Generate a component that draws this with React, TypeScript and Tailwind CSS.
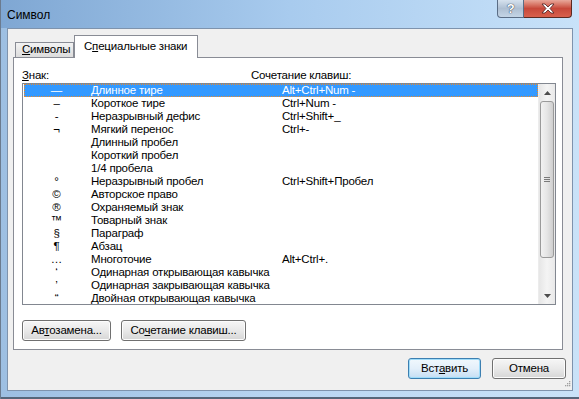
import React from "react";

const rows: [string, string, string][] = [
  ["—", "Длинное тире", "Alt+Ctrl+Num -"],
  ["–", "Короткое тире", "Ctrl+Num -"],
  ["-", "Неразрывный дефис", "Ctrl+Shift+_"],
  ["¬", "Мягкий перенос", "Ctrl+-"],
  ["", "Длинный пробел", ""],
  ["", "Короткий пробел", ""],
  ["", "1/4 пробела", ""],
  ["°", "Неразрывный пробел", "Ctrl+Shift+Пробел"],
  ["©", "Авторское право", ""],
  ["®", "Охраняемый знак", ""],
  ["™", "Товарный знак", ""],
  ["§", "Параграф", ""],
  ["¶", "Абзац", ""],
  ["…", "Многоточие", "Alt+Ctrl+."],
  ["‘", "Одинарная открывающая кавычка", ""],
  ["’", "Одинарная закрывающая кавычка", ""],
  ["“", "Двойная открывающая кавычка", ""],
];

function Btn({ children, w, focused }: { children: React.ReactNode; w: string; focused?: boolean }) {
  return (
    <div
      className={
        "h-[21px] flex items-center justify-center rounded-[3px] border " +
        w +
        (focused
          ? " border-[#3c7fb1] bg-gradient-to-b from-[#f1f8fd] via-[#e3effa] to-[#c5def3] shadow-[inset_0_0_0_1px_#9fdcf9]"
          : " border-[#707070] bg-gradient-to-b from-[#f6f6f6] via-[#e9e9e9] to-[#d6d6d6] shadow-[inset_0_0_0_1px_#fcfcfc]")
      }
    >
      <span className="text-[11.5px] leading-none text-black">{children}</span>
    </div>
  );
}

function ScrollBar() {
  return (
    <div className="w-[17px] flex flex-col bg-gradient-to-r from-[#e6e6e6] via-[#f4f4f4] to-[#e9e9e9] border-l border-[#ececec]">
      <div className="h-[17px] flex items-center justify-center">
        <svg width="7" height="4" viewBox="0 0 7 4">
          <path d="M0 4 L3.5 0 L7 4 Z" fill="#4d4d4d" />
        </svg>
      </div>
      <div className="h-[157px] mx-[1px] rounded-[3px] border border-[#9a9a9a] bg-gradient-to-r from-[#f2f2f2] via-[#e5e5e5] to-[#cfcfcf] flex items-center justify-center">
        <div className="flex flex-col gap-[1px]">
          <div className="w-[6px] h-[1px] bg-[#7a7a7a]" />
          <div className="w-[6px] h-[1px] bg-[#7a7a7a]" />
          <div className="w-[6px] h-[1px] bg-[#7a7a7a]" />
        </div>
      </div>
      <div className="flex-1" />
      <div className="h-[17px] flex items-center justify-center">
        <svg width="7" height="4" viewBox="0 0 7 4">
          <path d="M0 0 L3.5 4 L7 0 Z" fill="#4d4d4d" />
        </svg>
      </div>
    </div>
  );
}

export default function App() {
  return (
    <div
      className="w-[579px] h-[399px] flex flex-col bg-gradient-to-r from-[#9dbfe2] via-[#b9d6f2] to-[#c9e2f8] border-l border-[#6b7b8f] overflow-hidden tracking-[-0.2px]"
      style={{ fontFamily: '"Liberation Sans", Arial, sans-serif' }}
    >
      {/* title bar */}
      <div className="h-[28px] flex items-start bg-gradient-to-r from-[#7fa7d3] via-[#a8cbee] to-[#c8e2f9]">
        <span className="pl-[6px] pt-[6px] text-[12px] text-black tracking-normal">Символ</span>
        <div className="ml-auto mr-[7px] flex">
          <div className="w-[27px] h-[18px] rounded-bl-[4px] border border-t-0 border-[#5a6d85] bg-gradient-to-b from-[#d6e2ee] via-[#aebfd2] to-[#c4d5e6] flex items-center justify-center">
            <span className="text-[13px] font-bold leading-none text-white [text-shadow:0_0_1px_#25374f,0_0_1px_#25374f]">?</span>
          </div>
          <div className="w-[48px] h-[18px] rounded-br-[4px] border border-l-0 border-t-0 border-[#5b2a22] bg-gradient-to-b from-[#e8a89b] via-[#c7483a] to-[#d9604c] flex items-center justify-center">
            <svg width="14" height="11" viewBox="0 0 14 11">
              <path d="M1 1 L4 1 L7 4 L10 1 L13 1 L9 5.5 L13 10 L10 10 L7 7 L4 10 L1 10 L5 5.5 Z" fill="#ffffff" stroke="#4a2020" strokeWidth="0.8" strokeLinejoin="round" />
            </svg>
          </div>
        </div>
      </div>

      {/* client area */}
      <div className="mx-[6px] h-[363px] border border-[#7e93ad] bg-[#f0f0f0] flex flex-col pt-[6px]">
        {/* tabs */}
        <div className="flex items-end h-[22px] pl-[7px]">
          <div className="h-[15px] w-[59px] border border-b-0 border-[#898c95] bg-gradient-to-b from-[#f3f3f3] to-[#dcdcdc] flex items-center pl-[6px]">
            <span className="text-[11.5px] leading-none whitespace-nowrap">
              <u>С</u>имволы
            </span>
          </div>
          <div className="relative z-10 h-[23px] -mb-[1px] w-[124px] border border-b-0 border-[#898c95] bg-white flex items-center pl-[9px] pb-[1px]">
            <span className="text-[11.5px] leading-none whitespace-nowrap">
              С<u>п</u>ециальные знаки
            </span>
          </div>
        </div>

        {/* tab page */}
        <div className="ml-[5px] w-[550px] h-[294px] border border-[#898c95] bg-white flex flex-col pl-[8px] pr-[6px]">
          <div className="h-[25px] flex items-end pb-[2px] text-[11.5px] leading-none">
            <span className="w-[229px]">
              <u>З</u>нак:
            </span>
            <span>Сочетание клавиш:</span>
          </div>
          <div className="h-[222px] border border-[#828790] flex">
            <div className="flex-1 flex flex-col overflow-hidden pl-[1px]">
              {rows.map(([sym, name, key], i) => (
                <div
                  key={i}
                  className={
                    "h-[13px] shrink-0 flex items-center text-[11.5px] leading-none " +
                    (i === 0
                      ? "bg-[#3399ff] text-white border border-dotted border-[#e88a2c]"
                      : "text-black border border-transparent")
                  }
                >
                  <span className="w-[63px] text-center">{sym}</span>
                  <span className="w-[194px] pl-[3px] whitespace-nowrap">{name}</span>
                  <span className="whitespace-nowrap">{key}</span>
                </div>
              ))}
            </div>
            <ScrollBar />
          </div>
          <div className="mt-[15px] flex gap-[10px]">
            <Btn w="w-[89px]">
              Ав<u>т</u>озамена...
            </Btn>
            <Btn w="w-[125px]">
              Со<u>ч</u>етание клавиш...
            </Btn>
          </div>
        </div>

        {/* bottom buttons */}
        <div className="mt-[8px] flex justify-end gap-[11px] pr-[6px]">
          <Btn w="w-[73px]" focused>
            Вст<u>а</u>вить
          </Btn>
          <Btn w="w-[74px]">Отмена</Btn>
        </div>
        <div className="flex-1 flex justify-end items-end pr-[1px] pb-[1px]">
          <svg width="10" height="10" viewBox="0 0 10 10">
            <g fill="#a0a0a0">
              <rect x="8" y="2" width="1.3" height="1.3" />
              <rect x="6" y="4" width="1.3" height="1.3" />
              <rect x="8" y="4" width="1.3" height="1.3" />
              <rect x="4" y="6" width="1.3" height="1.3" />
              <rect x="6" y="6" width="1.3" height="1.3" />
              <rect x="8" y="6" width="1.3" height="1.3" />
            </g>
          </svg>
        </div>
      </div>
      <div className="flex-1 border-b-[2px] border-[#56667a]" />
    </div>
  );
}
